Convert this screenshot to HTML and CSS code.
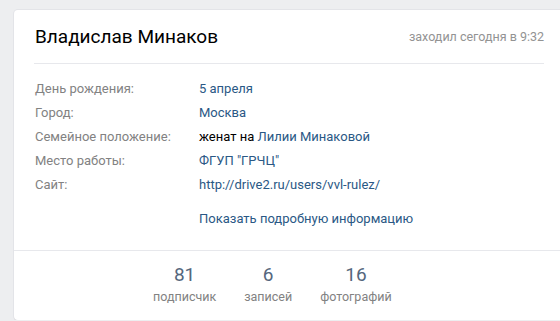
FILE: index.html
```html
<!DOCTYPE html>
<html lang="ru">
<head>
    <meta charset="UTF-8">
    <title>Владислав Минаков</title>
    <link rel="stylesheet" href="styles.css">
</head>
<body>
    <div class="profile-card">
        <div class="profile-header">
            <h2 class="profile-name">Владислав Минаков</h2>
            <span class="profile-online">заходил сегодня в 9:32</span>
        </div>
        <div class="profile-info">
            <div class="info-row">
                <div class="info-label">День рождения:</div>
                <div class="info-value"><a href="#">5 апреля</a></div>
            </div>
            <div class="info-row">
                <div class="info-label">Город:</div>
                <div class="info-value"><a href="#">Москва</a></div>
            </div>
            <div class="info-row">
                <div class="info-label">Семейное положение:</div>
                <div class="info-value">женат на <a href="#">Лилии Минаковой</a></div>
            </div>
            <div class="info-row">
                <div class="info-label">Место работы:</div>
                <div class="info-value"><a href="#">ФГУП "ГРЧЦ"</a></div>
            </div>
            <div class="info-row">
                <div class="info-label">Сайт:</div>
                <div class="info-value"><a href="#">http://drive2.ru/users/vvl-rulez/</a></div>
            </div>
            <div class="info-more">
                <a href="#">Показать подробную информацию</a>
            </div>
        </div>
        <div class="profile-counters">
            <a class="counter" href="#">
                <div class="counter-count">81</div>
                <div class="counter-label">подписчик</div>
            </a>
            <a class="counter" href="#">
                <div class="counter-count">6</div>
                <div class="counter-label">записей</div>
            </a>
            <a class="counter" href="#">
                <div class="counter-count">16</div>
                <div class="counter-label">фотографий</div>
            </a>
        </div>
    </div>
</body>
</html>
```

FILE: styles.css
```css
body {
    font-family: Roboto, "Open Sans", Arial, sans-serif;
    margin: 0;
    padding: 10px 0 0 14px;
    background-color: #edeef0;
    overflow: hidden;
    font-size: 13px;
    color: #000;
}
a {
    color: #2a5885;
    text-decoration: none;
}
.profile-card {
    width: 550px;
    background-color: white;
    border-radius: 4px;
    box-shadow: 0 1px 0 0 #d7d8db, 0 0 0 1px #e3e4e8;
}
.profile-header {
    display: flex;
    align-items: center;
    justify-content: space-between;
    height: 53px;
    margin: 0 20px;
    border-bottom: 1px solid #e7e8ec;
}
.profile-name {
    margin: 0;
    font-size: 19px;
    font-weight: normal;
    padding-left: 1px;
}
.profile-online {
    color: #939393;
    font-size: 12.5px;
}
.profile-info {
    padding: 12px 20px 19px 21px;
    border-bottom: 1px solid #e7e8ec;
}
.info-row {
    display: flex;
    height: 24px;
    align-items: center;
}
.info-label {
    width: 164px;
    color: #828282;
}
.info-more {
    margin-top: 11px;
    padding-left: 164px;
    line-height: 24px;
}
.profile-counters {
    display: flex;
    gap: 28px;
    padding: 12px 0 13px 139px;
}
.counter {
    text-align: center;
}
.counter-count {
    font-size: 19px;
    color: #55677d;
    line-height: 24px;
}
.counter-label {
    color: #828282;
    font-size: 12.5px;
    line-height: 20px;
}
```
